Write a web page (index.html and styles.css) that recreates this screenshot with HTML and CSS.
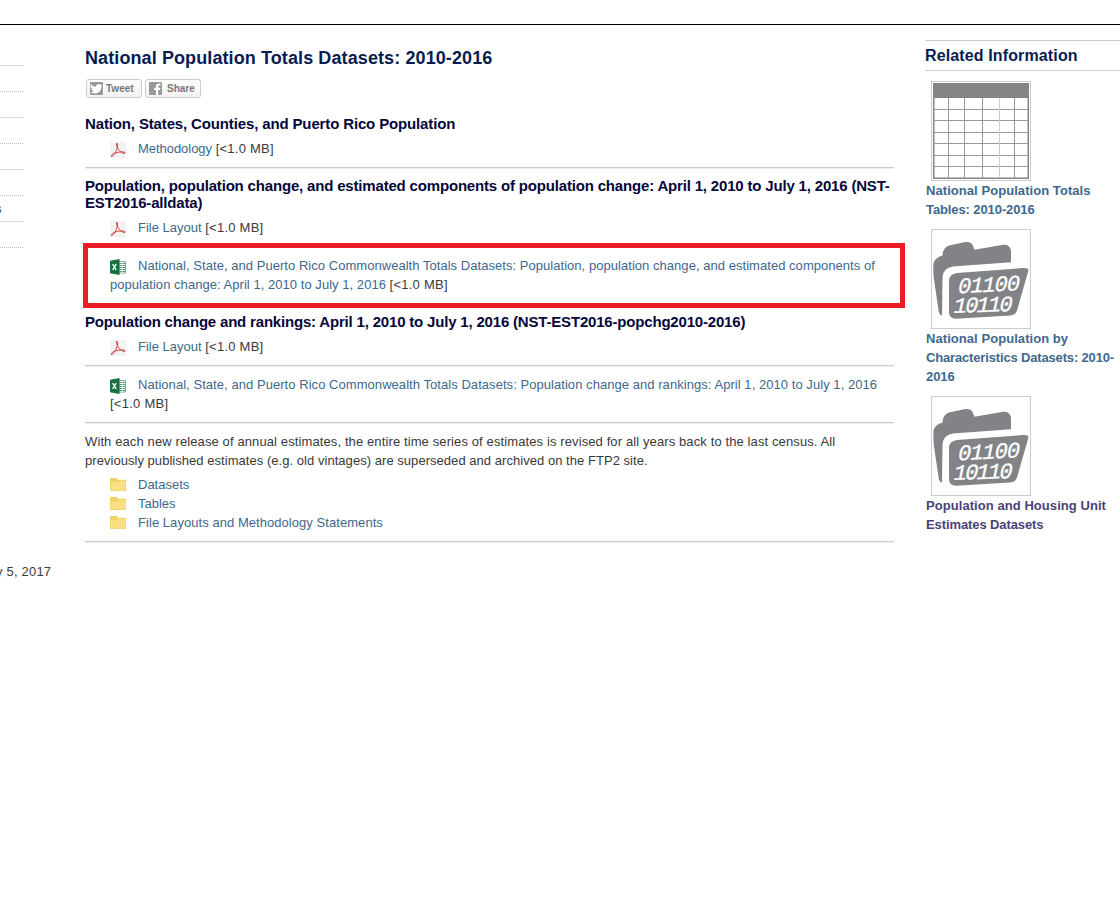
FILE: index.html
```
<!DOCTYPE html>
<html lang="en">
<head>
<meta charset="utf-8">
<title>National Population Totals Datasets: 2010-2016</title>
<link rel="stylesheet" href="styles.css">
</head>
<body>
<svg class="defs" width="0" height="0" aria-hidden="true">
  <symbol id="pdf" viewBox="0 0 16 16">
    <path d="M0 0h16v16H0z" fill="#f3f3f3"/>
    <path d="M6.700 1.200C8 1 7.600 4.500 7 6.800 5.700 10.500 3 14.800 1.500 14.500 0 13.500 4 10.800 8.500 10.200c3.500-.5 6.900-.3 6.600.8-.5 1.300-4.300-.4-6.300-3.200C6.800 5 5.600 1.400 6.700 1.200z" fill="none" stroke="#d03c3f" stroke-width="1"/>
  </symbol>
  <symbol id="xls" viewBox="0 0 16 16">
    <path d="M9 2.500h6.500v11.500H9z" fill="#fff" stroke="#5d9b78" stroke-width=".8"/>
    <path d="M9.500 4.500H15M9.500 6.500H15M9.500 8.500H15M9.500 10.500H15M9.500 12.500H15" stroke="#4f9570" stroke-width="1.100"/>
    <path d="M12.200 3v11" stroke="#fff" stroke-width=".8"/>
    <path d="M0 1.800 9.500 0v16L0 14.300z" fill="#17723f"/>
    <path d="M2.700 5.200 6.200 11M6.200 5.200 2.700 11" stroke="#fff" stroke-width="1.400"/>
  </symbol>
  <symbol id="folder" viewBox="0 0 16 13">
    <path d="M0 1Q0 0 1 0h5.500q1 0 1 1v.7H15q1 0 1 1V13H0z" fill="#f3d265"/>
    <path d="M.5 4.500 7 4.300l1.300-1.200H15.500v9.400H.5z" fill="#fae083"/>
  </symbol>
  <symbol id="bindir" viewBox="0 0 98 98">
    <path d="M10 85.500Q7 85 6.500 80L1.800 48Q1 40 1.500 33Q3 27.500 10.500 25.500Q10.500 18 17 15.500L32 12.300Q38.500 11 40.300 14.500L42.500 19.700L71 14.800Q77.500 14 79 20.500V32.300L24 36.300Q10.700 37 10.500 48Z" fill="#828386"/>
    <path d="M25 43L91 38Q98 37.500 96 42L85 80.500Q83.500 85 78 85.500L24 88.700Q17 88.700 17 82V51Q17 44 25 43Z" fill="#828386"/>
    <g fill="#fff" stroke="#fff" stroke-width=".35" font-family="'Liberation Mono', monospace" font-size="22">
      <text transform="translate(25 63.500) rotate(-3) skewX(-14)" textLength="62">01100</text>
      <text transform="translate(20.500 83) rotate(-2) skewX(-14)" textLength="59">10110</text>
    </g>
  </symbol>
</svg>
<div class="topline"></div>
<div class="page">
  <nav class="sidenav">
    <span></span><span></span><span></span><span></span><span></span><span></span><span><i>s</i></span><span></span>
    <p class="revised"><b>y 5, 2017</b></p>
  </nav>
  <main>
    <h1>National Population Totals Datasets: 2010-2016</h1>
    <div class="social">
      <a class="btn"><svg width="13" height="13" viewBox="0 0 13 13"><rect width="13" height="13" rx="1" fill="#999"/><path d="M.5 1.800C2 4 4 4.800 6 4.800 6 2 9 1 10.700 2.900l1.800-.5-1 1.700C11.800 8 9 11.500 5 11.400 3 11.400 1.500 10.800.5 10c1.500 0 2.500-.4 3.200-1C2.500 8.800 1.700 8 1.500 7h1C1 6.300.5 5.300.6 4.500z" fill="#fff"/></svg>Tweet</a>
      <a class="btn share"><svg width="13" height="13" viewBox="0 0 13 13"><rect width="13" height="13" rx="1" fill="#999"/><path d="M7 13V8H5.200V5.800H7V4Q7 1.500 9.500 1.500h2v2H10q-.8 0-.8.900v1.400h2.200L11.100 8H9.200v5z" fill="#fff"/></svg>Share</a>
    </div>
    <h2 class="t1">Nation, States, Counties, and Puerto Rico Population</h2>
    <p class="item rule"><svg class="ic"><use href="#pdf"/></svg><a class="meth">Methodology</a> <span class="size">[&lt;1.0 MB]</span></p>
    <h2 class="t2">Population, population change, and estimated components of population change: April 1, 2010 to July 1, 2016 (NST-<br>EST2016-alldata)</h2>
    <p class="item gap"><svg class="ic"><use href="#pdf"/></svg><a>File Layout</a> <span class="size">[&lt;1.0 MB]</span></p>
    <p class="item marked"><svg class="ic"><use href="#xls"/></svg><a><span class="l1">National, State, and Puerto Rico Commonwealth Totals Datasets: Population, population change, and estimated components of</span><br><span class="l1">population change: April 1, 2010 to July 1, 2016</span></a> <span class="size">[&lt;1.0 MB]</span></p>
    <h2 class="t3">Population change and rankings: April 1, 2010 to July 1, 2016 (NST-EST2016-popchg2010-2016)</h2>
    <p class="item rule"><svg class="ic"><use href="#pdf"/></svg><a>File Layout</a> <span class="size">[&lt;1.0 MB]</span></p>
    <p class="item rule top9"><svg class="ic"><use href="#xls"/></svg><a class="l2">National, State, and Puerto Rico Commonwealth Totals Datasets: Population change and rankings: April 1, 2010 to July 1, 2016</a><br><span class="size">[&lt;1.0 MB]</span></p>
    <p class="note"><span class="l3">With each new release of annual estimates, the entire time series of estimates is revised for all years back to the last census. All</span><br><span class="l4">previously published estimates (e.g. old vintages) are superseded and archived on the FTP2 site.</span></p>
    <div class="folders rule">
      <p class="item"><svg class="ic fo"><use href="#folder"/></svg><a>Datasets</a></p>
      <p class="item"><svg class="ic fo"><use href="#folder"/></svg><a>Tables</a></p>
      <p class="item"><svg class="ic fo"><use href="#folder"/></svg><a class="l2">File Layouts and Methodology Statements</a></p>
    </div>
  </main>
  <aside>
    <h3>Related Information</h3>
    <div class="card">
      <svg class="thumb" viewBox="0 0 98 98">
        <path d="M1 1h96v96H1z" fill="#858585"/>
        <path d="M2.500 16H95.500V95.500H2.500z" fill="#fff"/>
        <path d="M2 27.500h94M2 38.500h94M2 50.500h94M2 61.500h94M2 73.500h94M2 84.500h94M16.500 16v80M32.500 16v80M50.500 16v80M82.500 16v80" stroke="#999" fill="none"/>
        <path d="M67.500 16v80" stroke="#ccc"/>
      </svg>
      <a><span class="c1">National Population Totals</span><br><span class="c2">Tables: 2010-2016</span></a>
    </div>
    <div class="card">
      <svg class="thumb"><use href="#bindir"/></svg>
      <a><span class="c1">National Population by</span><br><span class="c3">Characteristics Datasets: 2010-</span><br><span class="c2">2016</span></a>
    </div>
    <div class="card">
      <svg class="thumb"><use href="#bindir"/></svg>
      <a class="visited"><span class="c1">Population and Housing Unit</span><br><span class="c2">Estimates Datasets</span></a>
    </div>
  </aside>
</div>
</body>
</html>
```

FILE: styles.css
```
*, *::after { box-sizing: border-box; }
body { margin: 0; height: 918px; overflow: hidden; background: #fff; color: #3a3a3a; font: 13px/19px "Liberation Sans", Arial, sans-serif; }
.defs { display: block; height: 0; }
h1, h2, h3, p { margin: 0; white-space: nowrap; }
.topline { height: 25px; border-bottom: 1px solid #000; }
.page { display: grid; grid-template-columns: 85px 809px 226px; }
aside { padding-left: 31px; }
.sidenav { padding-top: 15px; overflow: hidden; }
.sidenav span { display: block; width: 23px; height: 26px; border-bottom: 1px dotted #bbb; line-height: 26px; }
.sidenav i { display: block; margin-left: -5px; font-style: normal; color: #1f4468; }
.revised { padding-top: 314px; }
.revised b { display: block; margin-left: -4px; font-weight: normal; letter-spacing: .2px; }
a { color: #40688c; }

h1 { padding-top: 21px; height: 54px; font-size: 18px; line-height: 24px; color: #071c50; letter-spacing: .1px; }
.social { display: flex; gap: 3px; padding-left: 1px; }
.btn { display: flex; align-items: center; gap: 3px; width: 56px; height: 19px; padding-left: 3px; border: 1px solid #ccc; border-radius: 3px; background: linear-gradient(#fff, #f2f2f2); color: #777; font-size: 10px; font-weight: bold; line-height: 17px; }
.btn svg { flex: none; }
.btn.share { gap: 5px; }
h2 { font-size: 15px; line-height: 17px; color: #06073a; }
.t1 { padding-top: 17px; margin-bottom: 7px; letter-spacing: -.14px; }
.t2 { padding-top: 9px; margin-bottom: 7px; letter-spacing: -.176px; }
.t3 { padding-top: 19px; margin-bottom: 7px; letter-spacing: -.186px; }
.item { padding-left: 25px; }
.size { letter-spacing: .25px; }
.meth { letter-spacing: -.04px; }
.rule { padding-bottom: 9px; border-bottom: 1px solid #ccc; box-shadow: 0 1px #eee; }
.top9 { padding-top: 9px; }
.gap { margin-bottom: 19px; }
.ic { display: inline-block; width: 16px; height: 16px; margin: -2px 12px -4px 0; vertical-align: -1px; }
.fo { height: 13px; vertical-align: 2px; }
.marked { position: relative; }
.marked::after { content: ""; position: absolute; left: -2px; top: -13px; width: 822px; height: 65px; border: 5px solid #ed1c24; }
.l1 { letter-spacing: .042px; }
.l2 { letter-spacing: .053px; }
.l3 { letter-spacing: .112px; }
.l4 { letter-spacing: .042px; }
.note { padding-top: 9px; margin-bottom: 5px; }

h3 { height: 31px; margin-top: 15px; border: solid #ccc; border-width: 1px 0; font-size: 16px; line-height: 29px; color: #071c50; letter-spacing: .13px; }
.card { padding-left: 1px; margin-top: 10px; }
.thumb { display: block; width: 100px; height: 100px; margin-left: 5px; border: 1px solid #ccc; }
.card a { display: block; font-weight: bold; white-space: nowrap; }
.c1 { letter-spacing: .06px; }
.c2 { letter-spacing: -.1px; }
.c3 { letter-spacing: -.16px; }
.card .visited { color: #4b4275; }
```
